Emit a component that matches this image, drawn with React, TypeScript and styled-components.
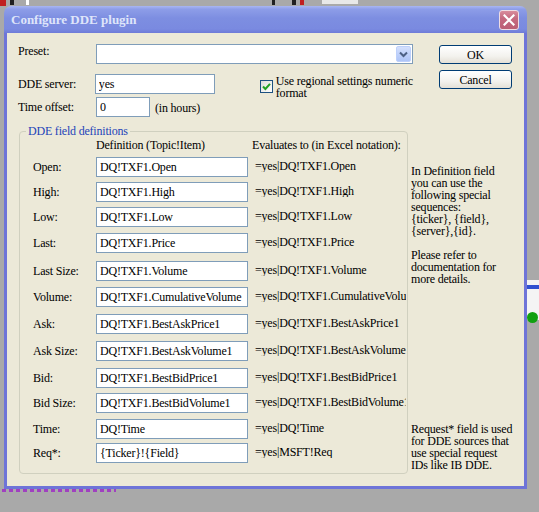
import React from "react";
import styled, { createGlobalStyle } from "styled-components";

const GlobalStyle = createGlobalStyle`
  html, body { margin: 0; padding: 0; background: #a9a9a9; }
  body { font-family: "Liberation Serif", "Times New Roman", serif; }
  * { box-sizing: border-box; }
`;

const Desktop = styled.div`
  position: relative;
  width: 539px;
  height: 512px;
  overflow: hidden;
  background: #a9a9a9;
  padding: 6px 0 0 4px;
`;

const ChartMark = styled.div<{ $x: number; $y: number; $w: number; $h: number; $bg: string }>`
  position: absolute;
  left: ${(p) => p.$x}px;
  top: ${(p) => p.$y}px;
  width: ${(p) => p.$w}px;
  height: ${(p) => p.$h}px;
  background: ${(p) => p.$bg};
`;

const Dots = styled.div`
  position: absolute;
  left: 2px;
  top: 489px;
  width: 114px;
  height: 3px;
  background: repeating-linear-gradient(to right, #a040c0 0 4px, transparent 4px 7px);
`;

const GreenDot = styled.div`
  position: absolute;
  left: 527px;
  top: 312px;
  width: 11px;
  height: 11px;
  border-radius: 50%;
  background: #10a010;
`;

const Window = styled.div`
  width: 523px;
  height: 483px;
  display: flex;
  flex-direction: column;
`;

const TitleBar = styled.div`
  height: 27px;
  border-radius: 7px 7px 0 0;
  background: linear-gradient(to bottom, #a9b6f2 0%, #8d9de8 12%, #7d8ee1 45%, #7a8ae0 85%, #6e7bd8 100%);
  display: flex;
  align-items: center;
  padding: 0 8px 0 7px;
`;

const Title = styled.div`
  flex: 1;
  font: bold 13px "Liberation Serif", "Times New Roman", serif;
  color: #dfe5fa;
`;

const CloseButton = styled.div`
  width: 20px;
  height: 20px;
  border: 1px solid #eedde4;
  border-radius: 3px;
  background: linear-gradient(to bottom, #d88c9c 0%, #c56a80 40%, #bb5f76 100%);
  display: flex;
  align-items: center;
  justify-content: center;
`;

const Frame = styled.div`
  flex: 1;
  border: 3px solid #6e74d8;
  border-top: 0;
  background: #ece9d8;
  padding: 11px 0 0 11px;
  font-size: 12px;
  letter-spacing: -0.2px;
  line-height: 12px;
  color: #000;
`;

const TopSection = styled.div`
  display: flex;
  align-items: flex-start;
`;

const FormCol = styled.div`
  width: 395px;
  display: flex;
  flex-direction: column;
`;

const FormRow = styled.div<{ $gap?: number }>`
  display: flex;
  align-items: center;
  height: 20px;
  margin-top: ${(p) => p.$gap ?? 0}px;
`;

const FormLabel = styled.div<{ $dy?: number }>`
  width: 78px;
  position: relative;
  top: ${(p) => p.$dy ?? 0}px;
`;

const TextBox = styled.input<{ $w: number }>`
  width: ${(p) => p.$w}px;
  height: 20px;
  border: 1px solid #7f9db9;
  background: #fff;
  padding: 0 3px;
  margin: 0;
  font: 12px "Liberation Serif", "Times New Roman", serif;
  letter-spacing: -0.2px;
  color: #000;
  outline: none;
`;

const Combo = styled.div`
  width: 317px;
  height: 20px;
  border: 1px solid #7f9db9;
  background: #fff;
  display: flex;
  justify-content: flex-end;
  padding: 1px;
`;

const ComboButton = styled.div`
  width: 15px;
  height: 16px;
  border: 1px solid #bdd0fb;
  border-radius: 2px;
  background: linear-gradient(to bottom, #d4e0fd 0%, #bccffa 60%, #aec5f7 100%);
  display: flex;
  align-items: center;
  justify-content: center;
`;

const CheckArea = styled.div`
  display: flex;
  align-items: flex-start;
  align-self: flex-start;
  margin-left: 45px;
  margin-top: 1px;
`;

const CheckBox = styled.div`
  width: 13px;
  height: 13px;
  margin-top: 5px;
  border: 1px solid #1c5180;
  background: linear-gradient(135deg, #dcdcd7 0%, #fff 100%);
  display: flex;
  align-items: center;
  justify-content: center;
`;

const CheckText = styled.div`
  margin-left: 3px;
  white-space: nowrap;
`;

const Hint = styled.div`
  margin-left: 5px;
  position: relative;
  top: 1px;
`;

const ButtonCol = styled.div`
  display: flex;
  flex-direction: column;
  gap: 6px;
  margin-left: 26px;
  margin-top: 1px;
`;

const Button = styled.div`
  width: 73px;
  height: 19px;
  border: 1px solid #003c74;
  border-radius: 3px;
  background: linear-gradient(to bottom, #ffffff 0%, #f3f2ee 60%, #e4e0d6 100%);
  display: flex;
  align-items: center;
  justify-content: center;
`;

const BottomSection = styled.div`
  display: flex;
  align-items: flex-start;
  margin-top: 8px;
`;

const GroupBox = styled.fieldset`
  width: 389px;
  margin: 0 0 0 1px;
  padding: 0 0 10px 13px;
  border: 1px solid #d0d0bf;
  border-radius: 4px;
  min-inline-size: 0;
`;

const GroupTitle = styled.legend`
  padding: 0 2px;
  margin-left: -7px;
  color: #1d44b8;
  line-height: 12px;
`;

const HeaderRow = styled.div`
  display: flex;
  height: 12px;
  margin-top: 2px;
`;

const HeaderDef = styled.div`
  margin-left: 63px;
  width: 156px;
`;

const FieldRow = styled.div<{ $gap: number }>`
  display: flex;
  align-items: center;
  height: 20px;
  margin-top: ${(p) => p.$gap}px;
`;

const FieldLabel = styled.div`
  width: 63px;
`;

const FieldInput = styled(TextBox)`
  flex: none;
`;

const Evaluated = styled.div`
  margin-left: 7px;
  width: 151px;
  overflow: hidden;
  white-space: nowrap;
  position: relative;
  top: -1px;
`;

const HelpCol = styled.div`
  margin-left: 3px;
  display: flex;
  flex-direction: column;
  white-space: nowrap;
`;

const HelpBlock = styled.div<{ $gap: number }>`
  margin-top: ${(p) => p.$gap}px;
`;

const fields = [
  { label: "Open:", def: "DQ!TXF1.Open", gap: 6 },
  { label: "High:", def: "DQ!TXF1.High", gap: 5 },
  { label: "Low:", def: "DQ!TXF1.Low", gap: 5 },
  { label: "Last:", def: "DQ!TXF1.Price", gap: 6 },
  { label: "Last Size:", def: "DQ!TXF1.Volume", gap: 8 },
  { label: "Volume:", def: "DQ!TXF1.CumulativeVolume", gap: 6 },
  { label: "Ask:", def: "DQ!TXF1.BestAskPrice1", gap: 7 },
  { label: "Ask Size:", def: "DQ!TXF1.BestAskVolume1", gap: 7 },
  { label: "Bid:", def: "DQ!TXF1.BestBidPrice1", gap: 7 },
  { label: "Bid Size:", def: "DQ!TXF1.BestBidVolume1", gap: 5 },
  { label: "Time:", def: "DQ!Time", gap: 6 },
  { label: "Req*:", def: "{Ticker}!{Field}", gap: 4, evalText: "=yes|MSFT!Req" },
];

export default function App() {
  return (
    <>
      <GlobalStyle />
      <Desktop>
        <ChartMark $x={0} $y={0} $w={6} $h={6} $bg="#c02020" />
        <ChartMark $x={10} $y={0} $w={4} $h={5} $bg="#202020" />
        <ChartMark $x={26} $y={0} $w={3} $h={5} $bg="#ffffff" />
        <ChartMark $x={272} $y={0} $w={3} $h={5} $bg="#202020" />
        <ChartMark $x={292} $y={0} $w={4} $h={5} $bg="#202020" />
        <ChartMark $x={300} $y={0} $w={4} $h={5} $bg="#c02020" />
        <ChartMark $x={322} $y={0} $w={36} $h={4} $bg="#e8e8e8" />
        <ChartMark $x={527} $y={280} $w={12} $h={40} $bg="#f4f4f4" />
        <ChartMark $x={527} $y={285} $w={12} $h={4} $bg="#3050d0" />
        <GreenDot />
        <Dots />
        <Window>
          <TitleBar>
            <Title>Configure DDE plugin</Title>
            <CloseButton>
              <svg width="12" height="12" viewBox="0 0 12 12">
                <path d="M1.5 1.5 L10.5 10.5 M10.5 1.5 L1.5 10.5" stroke="#fff" strokeWidth="2.2" strokeLinecap="square" />
              </svg>
            </CloseButton>
          </TitleBar>
          <Frame>
            <TopSection>
              <FormCol>
                <FormRow>
                  <FormLabel $dy={-3}>Preset:</FormLabel>
                  <Combo>
                    <ComboButton>
                      <svg width="9" height="7" viewBox="0 0 9 7">
                        <path d="M1 1.5 L4.5 5 L8 1.5" stroke="#4d6185" strokeWidth="2" fill="none" />
                      </svg>
                    </ComboButton>
                  </Combo>
                </FormRow>
                <FormRow $gap={10}>
                  <FormLabel $dy={0}>DDE server:</FormLabel>
                  <TextBox $w={120} readOnly value="yes" />
                  <CheckArea>
                    <CheckBox>
                      <svg width="9" height="9" viewBox="0 0 9 9">
                        <path d="M1 4.5 L3.4 7 L8 1.8" stroke="#21a121" strokeWidth="2" fill="none" />
                      </svg>
                    </CheckBox>
                    <CheckText>
                      Use regional settings numeric
                      <br />
                      format
                    </CheckText>
                  </CheckArea>
                </FormRow>
                <FormRow $gap={3}>
                  <FormLabel $dy={0}>Time offset:</FormLabel>
                  <TextBox $w={54} readOnly value="0" />
                  <Hint>(in hours)</Hint>
                </FormRow>
              </FormCol>
              <ButtonCol>
                <Button>OK</Button>
                <Button>Cancel</Button>
              </ButtonCol>
            </TopSection>
            <BottomSection>
              <GroupBox>
                <GroupTitle>DDE field definitions</GroupTitle>
                <HeaderRow>
                  <HeaderDef>Definition (Topic!Item)</HeaderDef>
                  <div>Evaluates to (in Excel notation):</div>
                </HeaderRow>
                {fields.map((f) => (
                  <FieldRow key={f.label} $gap={f.gap}>
                    <FieldLabel>{f.label}</FieldLabel>
                    <FieldInput $w={152} readOnly value={f.def} />
                    <Evaluated>{f.evalText ?? `=yes|${f.def}`}</Evaluated>
                  </FieldRow>
                ))}
              </GroupBox>
              <HelpCol>
                <HelpBlock $gap={40}>
                  In Definition field
                  <br />
                  you can use the
                  <br />
                  following special
                  <br />
                  sequences:
                  <br />
                  {"{ticker}, {field},"}
                  <br />
                  {"{server},{id}."}
                  <br />
                  <br />
                  Please refer to
                  <br />
                  documentation for
                  <br />
                  more details.
                </HelpBlock>
                <HelpBlock $gap={138}>
                  Request* field is used
                  <br />
                  for DDE sources that
                  <br />
                  use special request
                  <br />
                  IDs like IB DDE.
                </HelpBlock>
              </HelpCol>
            </BottomSection>
          </Frame>
        </Window>
      </Desktop>
    </>
  );
}
